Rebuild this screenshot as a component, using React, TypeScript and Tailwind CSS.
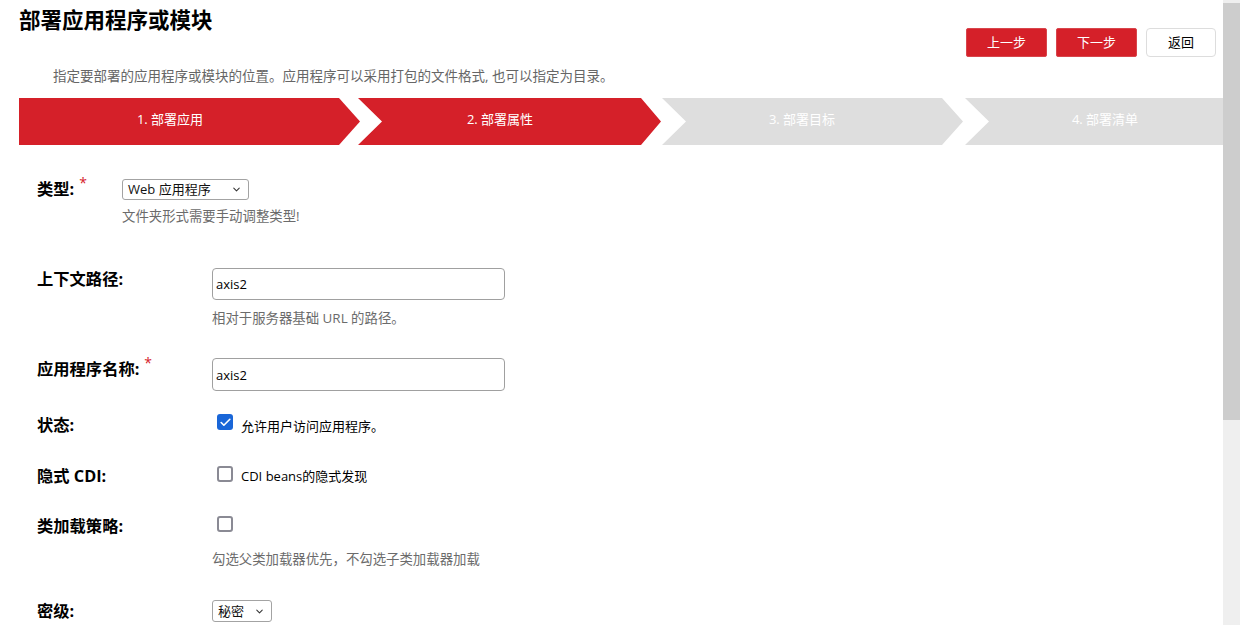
import { ChevronDown, Check } from "lucide-react";

const FONT = "font-['Open_Sans','Noto_Sans_CJK_SC',sans-serif]";

const Required = () => (
  <span className="-mt-[3px] ml-[5px] text-[14px] leading-[14px] font-normal text-[#d52029]">*</span>
);

const FakeSelect = ({ value, width }: { value: string; width: string }) => (
  <div
    className={`flex h-[21px] items-center justify-between rounded-[3px] border border-[#a3a3a3] bg-white pl-[5px] pr-[6px] text-[13px] leading-none text-[#111] ${width}`}
  >
    <span>{value}</span>
    <ChevronDown size={11} strokeWidth={2.2} className="text-[#333]" />
  </div>
);

const Box = ({ checked }: { checked?: boolean }) =>
  checked ? (
    <div className="flex h-[16px] w-[16px] shrink-0 items-center justify-center rounded-[3px] bg-[#1966d8]">
      <Check size={13} strokeWidth={3} className="text-white" />
    </div>
  ) : (
    <div className="h-[16px] w-[16px] shrink-0 rounded-[3px] border-2 border-[#8a8a94] bg-white" />
  );

const Label = ({ children, w = "w-[175px]" }: { children: React.ReactNode; w?: string }) => (
  <div className={`flex shrink-0 items-start pt-[1px] text-[16.3px] font-bold leading-[20px] text-black ${w}`}>
    {children}
  </div>
);

const Help = ({ children, className = "" }: { children: React.ReactNode; className?: string }) => (
  <p className={`text-[13.4px] leading-[20px] text-[#6b6b6b] ${className}`}>{children}</p>
);

const TextInput = ({ value, h }: { value: string; h: string }) => (
  <input
    readOnly
    defaultValue={value}
    className={`w-[293px] rounded-[4px] border border-[#a0a0a0] bg-white pl-[3px] text-[13px] text-black outline-none ${h}`}
  />
);

export default function App() {
  return (
    <div className={`flex h-[625px] w-[1256px] overflow-hidden bg-white ${FONT}`}>
      <main className="w-[1223px] shrink-0">
        {/* header */}
        <div className="flex items-start justify-between pl-[19px] pr-[7px]">
          <h1 className="pt-[6px] text-[21.5px] font-bold leading-[28px] text-black">部署应用程序或模块</h1>
          <div className="mt-[28px] flex gap-[9px]">
            <button className="h-[29px] w-[81px] rounded-[2px] border border-[#d8454c] bg-[#d52029] text-[13px] text-white">
              上一步
            </button>
            <button className="h-[29px] w-[81px] rounded-[2px] border border-[#d8454c] bg-[#d52029] text-[13px] text-white">
              下一步
            </button>
            <button className="h-[29px] w-[70px] rounded-[4px] border border-[#dddddd] bg-white text-[13px] text-black">
              返回
            </button>
          </div>
        </div>
        <p className="ml-[53px] mt-[9px] text-[13.5px] leading-[20px] text-[#666]">
          指定要部署的应用程序或模块的位置。应用程序可以采用打包的文件格式, 也可以指定为目录。
        </p>

        {/* steps */}
        <div className="ml-[19px] mt-[12px] flex h-[47px] text-[13px] text-white">
          <div className="flex w-[341px] items-center justify-center bg-[#d52029] pb-[4px] pr-[39px] [clip-path:polygon(0_0,320px_0,341px_50%,320px_100%,0_100%)]">
            1. 部署应用
          </div>
          <div className="-ml-[2px] flex w-[303px] items-center justify-center bg-[#d52029] pb-[4px] pr-[19px] [clip-path:polygon(0_0,283px_0,303px_50%,283px_100%,0_100%,24px_50%)]">
            2. 部署属性
          </div>
          <div className="ml-[1px] flex w-[301px] items-center justify-center bg-[#dedede] pb-[4px] pr-[21px] [clip-path:polygon(0_0,280px_0,301px_50%,280px_100%,0_100%,24px_50%)]">
            3. 部署目标
          </div>
          <div className="ml-[2px] flex flex-1 items-center justify-center bg-[#dedede] pb-[4px] pl-[22px] [clip-path:polygon(0_0,100%_0,100%_100%,0_100%,24px_50%)]">
            4. 部署清单
          </div>
        </div>

        {/* form */}
        <div className="pl-[37px]">
          <div className="mt-[34px] flex items-start">
            <div className="flex w-[85px] shrink-0 items-start text-[16.3px] font-bold leading-[20px] text-black">
              类型:<Required />
            </div>
            <div>
              <FakeSelect value="Web 应用程序" width="w-[127px]" />
              <Help className="mt-[6px]">文件夹形式需要手动调整类型!</Help>
            </div>
          </div>

          <div className="mt-[42px] flex items-start">
            <Label>上下文路径:</Label>
            <div>
              <TextInput value="axis2" h="h-[32px]" />
              <Help className="mt-[8px]">相对于服务器基础 URL 的路径。</Help>
            </div>
          </div>

          <div className="mt-[30px] flex items-start">
            <Label>
              应用程序名称:<Required />
            </Label>
            <TextInput value="axis2" h="h-[33px]" />
          </div>

          <div className="mt-[23px] flex items-start">
            <Label>状态:</Label>
            <div className="ml-[5px] flex items-start">
              <Box checked />
              <span className="ml-[8px] mt-[2px] text-[13px] leading-[20px] text-black">允许用户访问应用程序。</span>
            </div>
          </div>

          <div className="mt-[29px] flex items-start">
            <Label>隐式 CDI:</Label>
            <div className="ml-[5px] mt-[1px] flex items-start">
              <Box />
              <span className="ml-[8px] text-[13px] leading-[20px] text-black">CDI beans的隐式发现</span>
            </div>
          </div>

          <div className="mt-[29px] flex items-start">
            <Label>类加载策略:</Label>
            <div>
              <div className="ml-[5px] mt-[1px]">
                <Box />
              </div>
              <Help className="mt-[17px]">勾选父类加载器优先，不勾选子类加载器加载</Help>
            </div>
          </div>

          <div className="mt-[31px] flex items-start">
            <Label>密级:</Label>
            <div className="h-[22px]">
              <FakeSelect value="秘密" width="w-[60px] h-[22px]" />
            </div>
          </div>
        </div>
      </main>

      {/* scrollbar */}
      <div className="flex w-[17px] shrink-0 flex-col bg-[#efefef]">
        <div className="mt-[3px] h-[417px] bg-[#cdcdcd]" />
      </div>
    </div>
  );
}
